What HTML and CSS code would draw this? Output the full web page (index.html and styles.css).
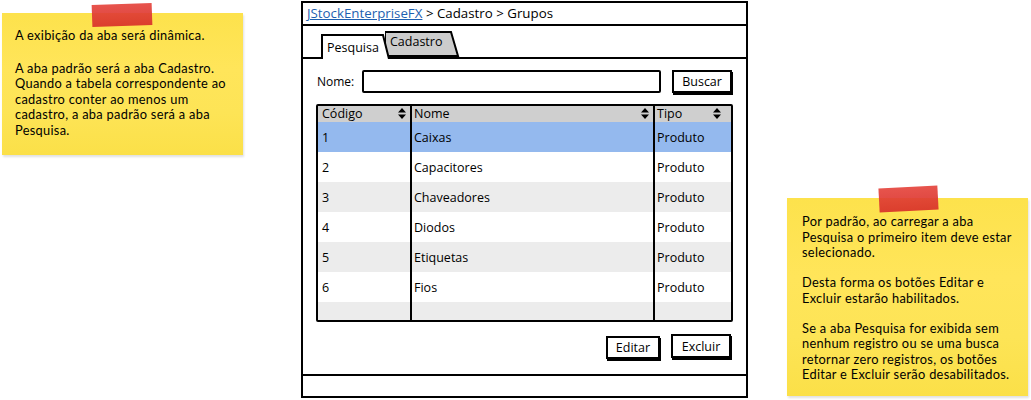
FILE: index.html
```html
<!DOCTYPE html>
<html lang="pt">
<head>
<meta charset="utf-8">
<link rel="stylesheet" href="styles.css">
</head>
<body>
<div class="canvas">
  <div class="note note-left">
    <div class="tape"></div>
    <p>A exibição da aba será dinâmica.</p>
    <p>A aba padrão será a aba Cadastro.<br>Quando a tabela correspondente ao<br>cadastro conter ao menos um<br>cadastro, a aba padrão será a aba<br>Pesquisa.</p>
  </div>

  <div class="window">
    <div class="titlebar"><a class="crumb-link">JStockEnterpriseFX</a> &gt; Cadastro &gt; Grupos</div>
    <div class="tabs">
      <div class="tab tab-active">
        <svg class="tab-shape" width="70" height="26" viewBox="0 0 70 26"><path d="M1 26 V2 H62 L68 26" fill="#fff" stroke="#000" stroke-width="2"/></svg>
        <span class="tab-label">Pesquisa</span>
      </div>
      <div class="tab tab-inactive">
        <svg class="tab-shape" width="76" height="26" viewBox="0 0 76 26"><path d="M0 25 L0 1 H66 L73 25 Z" fill="#cccccc" stroke="#000" stroke-width="2"/></svg>
        <span class="tab-label">Cadastro</span>
      </div>
    </div>
    <div class="panel">
      <div class="search-row">
        <span class="label">Nome:</span>
        <div class="input"></div>
        <div class="btn btn-buscar">Buscar</div>
      </div>
      <div class="table">
        <div class="row head">
          <div class="cell c1">Código<svg class="sort" width="8" height="11" viewBox="0 0 8 11"><path d="M0 4.5 L4 0 L8 4.5 Z M0 6.5 L4 11 L8 6.5 Z" fill="#000"/></svg></div>
          <div class="cell c2">Nome<svg class="sort" width="8" height="11" viewBox="0 0 8 11"><path d="M0 4.5 L4 0 L8 4.5 Z M0 6.5 L4 11 L8 6.5 Z" fill="#000"/></svg></div>
          <div class="cell c3">Tipo<svg class="sort" width="8" height="11" viewBox="0 0 8 11"><path d="M0 4.5 L4 0 L8 4.5 Z M0 6.5 L4 11 L8 6.5 Z" fill="#000"/></svg></div>
        </div>
        <div class="row sel"><div class="cell c1">1</div><div class="cell c2">Caixas</div><div class="cell c3">Produto</div></div>
        <div class="row"><div class="cell c1">2</div><div class="cell c2">Capacitores</div><div class="cell c3">Produto</div></div>
        <div class="row alt"><div class="cell c1">3</div><div class="cell c2">Chaveadores</div><div class="cell c3">Produto</div></div>
        <div class="row"><div class="cell c1">4</div><div class="cell c2">Diodos</div><div class="cell c3">Produto</div></div>
        <div class="row alt"><div class="cell c1">5</div><div class="cell c2">Etiquetas</div><div class="cell c3">Produto</div></div>
        <div class="row"><div class="cell c1">6</div><div class="cell c2">Fios</div><div class="cell c3">Produto</div></div>
        <div class="row alt last"><div class="cell c1"></div><div class="cell c2"></div><div class="cell c3"></div></div>
      </div>
      <div class="actions">
        <div class="btn btn-editar">Editar</div>
        <div class="btn btn-excluir">Excluir</div>
      </div>
    </div>
    <div class="statusbar"></div>
  </div>

  <div class="note note-right">
    <div class="tape"></div>
    <p>Por padrão, ao carregar a aba<br>Pesquisa o primeiro item deve estar<br>selecionado.</p>
    <p>Desta forma os botões Editar e<br>Excluir estarão habilitados.</p>
    <p>Se a aba Pesquisa for exibida sem<br>nenhum registro ou se uma busca<br>retornar zero registros, os botões<br>Editar e Excluir serão desabilitados.</p>
  </div>
</div>
</body>
</html>
```

FILE: styles.css
```css
* { box-sizing: border-box; }
html, body { margin: 0; padding: 0; background: #fff; }
body { font-family: "Open Sans", "Lato", sans-serif; color: #000; }

.canvas { position: relative; width: 1031px; height: 400px; overflow: hidden; }

/* sticky notes */
.note {
  position: absolute;
  background: linear-gradient(180deg, #fde24c 0%, #ffe55a 40%, #fde456 70%, #fbe048 100%);
  box-shadow: 1px 2px 2px rgba(0,0,0,0.12);
  font-family: "Lato", "Open Sans", sans-serif;
  font-size: 12.8px;
  letter-spacing: 0.3px;
  line-height: 15.5px;
  padding: 13px 4px 10px 13px;
  white-space: nowrap;
}
.note p { margin: 0 0 17px 0; }
.note p:last-child { margin-bottom: 0; }
.note-left { left: 2px; top: 13px; width: 241px; height: 142px; padding-top: 15px; }
.note-right { left: 787px; top: 198px; width: 241px; height: 198px; padding: 16px 2px 10px 15px; }
.note-right p { margin-bottom: 14.5px; }

.tape {
  position: absolute;
  width: 60px; height: 22px;
  background: linear-gradient(180deg, #e5453d 0%, #d8302a 100%);
  opacity: 0.92;
}
.note-left .tape { left: 90px; top: -9px; transform: rotate(-2deg); }
.note-right .tape { left: 92px; top: -11px; transform: rotate(-3deg); width: 59px; height: 24px; }

/* window */
.window {
  position: absolute;
  left: 301px; top: 1px;
  width: 447px; height: 397px;
  border: 2px solid #000;
  display: flex; flex-direction: column;
  background: #fff;
}
.titlebar {
  height: 23px;
  border-bottom: 2px solid #000;
  font-size: 13.3px;
  line-height: 20px;
  padding-left: 4px;
}
.crumb-link { color: #1d5fb0; text-decoration: underline; }

.tabs {
  height: 33px;
  border-bottom: 2px solid #000;
  display: flex;
  align-items: flex-end;
  padding-left: 18px;
  margin-bottom: -2px;
}
.tab { position: relative; height: 26px; }
.tab-shape { position: absolute; left: 0; top: 0; }
.tab-label { position: relative; font-size: 12.5px; }
.tab-active { width: 64px; z-index: 2; height: 26px; margin-bottom: -2px; }
.tab-active .tab-label { display: block; padding: 6px 0 0 6px; }
.tab-inactive { width: 76px; margin-left: 0; }
.tab-inactive .tab-label { display: block; padding: 2px 0 0 5px; }

.panel { flex: 1; padding: 0 14px 0 13px; display: flex; flex-direction: column; }

.search-row { display: flex; align-items: center; margin-top: 12px; height: 24px; }
.label { font-size: 12px; width: 46px; padding-left: 1px; }
.input { width: 300px; height: 23px; border: 2px solid #000; border-radius: 2px; }
.btn {
  border: 2px solid #000;
  box-shadow: 1px 2px 0 #000;
  font-size: 12.5px;
  display: flex; align-items: center; justify-content: center;
  background: #fff;
}
.btn-buscar { margin-left: 11px; width: 60px; height: 23px; }

.table {
  margin-top: 11px;
  width: 417px;
  height: 218px;
  border: 2px solid #000;
  border-radius: 2px;
  display: flex; flex-direction: column;
  overflow: hidden;
}
.row { display: flex; height: 30px; flex: none; font-size: 12.5px; }
.row.head { height: 16px; background: #cfcfcf; }
.row.sel { background: #94b9ee; }
.row.alt { background: #ececec; }
.row.last { flex: 1; }
.cell { display: flex; align-items: center; padding-left: 4px; position: relative; }
.c1 { width: 94px; border-right: 2px solid #000; }
.c2 { width: 243px; border-right: 2px solid #000; padding-left: 2px; }
.c3 { flex: 1; padding-left: 2px; }
.head .cell { line-height: 16px; }
.sort { position: absolute; right: 4px; top: 2px; }
.head .c3 .sort { right: 10px; }

.actions { display: flex; justify-content: flex-end; gap: 11px; margin-top: 12px; padding-right: 1px; }
.btn-editar { width: 54px; height: 23px; margin-top: 2px; }
.btn-excluir { width: 60px; height: 24px; }

.statusbar { height: 22px; border-top: 2px solid #000; }
```
